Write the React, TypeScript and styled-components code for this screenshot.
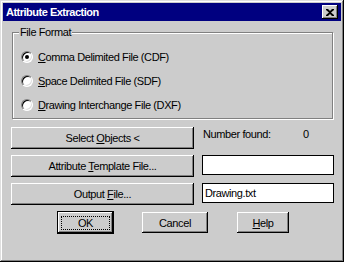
import React, { useState } from 'react';
import styled, { createGlobalStyle } from 'styled-components';

const face = '#cccccc';

const GlobalStyle = createGlobalStyle`
    html, body {
        margin: 0;
        padding: 0;
        background: ${face};
    }
    body {
        font-family: "Liberation Sans", Arial, sans-serif;
        font-size: 11px;
        letter-spacing: -0.4px;
        color: #000;
    }
`;

const formats = [
    { key: 'C', rest: 'omma Delimited File (CDF)' },
    { key: 'S', rest: 'pace Delimited File (SDF)' },
    { key: 'D', rest: 'rawing Interchange File (DXF)' },
];

function App() {
    const [format, setFormat] = useState(0);
    const [template, setTemplate] = useState('');
    const [output, setOutput] = useState('Drawing.txt');

    return (
        <>
            <GlobalStyle />
            <Window>
                <TitleBar>
                    <Title>Attribute Extraction</Title>
                    <CloseButton>
                        <svg width="8" height="7" viewBox="0 0 8 7">
                            <path d="M0 0h2l2 2 2-2h2v1L5 3.5 8 6v1H6L4 5 2 7H0V6l3-2.5L0 1z" fill="#000" />
                        </svg>
                    </CloseButton>
                </TitleBar>
                <Body>
                    <GroupBox>
                        <Legend>File Format</Legend>
                        {formats.map((f, i) => (
                            <RadioRow key={f.key} onClick={() => setFormat(i)}>
                                <Radio>{format === i && <Dot />}</Radio>
                                <span>
                                    <u>{f.key}</u>
                                    {f.rest}
                                </span>
                            </RadioRow>
                        ))}
                    </GroupBox>
                    <Grid>
                        <Button>
                            Select <u>O</u>bjects &lt;
                        </Button>
                        <Found>
                            <Label>Number found:</Label>
                            <span>0</span>
                        </Found>
                        <Button>
                            Attribute <u>T</u>emplate File...
                        </Button>
                        <Field value={template} onChange={(e) => setTemplate(e.target.value)} />
                        <Button>
                            Output <u>F</u>ile...
                        </Button>
                        <Field value={output} onChange={(e) => setOutput(e.target.value)} />
                    </Grid>
                    <Actions>
                        <Button $width={55} $default>
                            <Focus />
                            OK
                        </Button>
                        <Button $width={66}>Cancel</Button>
                        <Button $width={52}>
                            <u>H</u>elp
                        </Button>
                    </Actions>
                </Body>
            </Window>
        </>
    );
}

const Window = styled.div`
    box-sizing: border-box;
    width: 344px;
    height: 262px;
    padding: 3px;
    background: ${face};
    box-shadow: inset -1px -1px #000, inset 1px 1px #dfdfdf, inset -2px -2px #808080, inset 2px 2px #fff;
    display: flex;
    flex-direction: column;
`;

const TitleBar = styled.div`
    height: 18px;
    background: #000080;
    display: flex;
    align-items: center;
    justify-content: space-between;
    padding: 0 3px 0 3px;
`;

const Title = styled.span`
    color: #fff;
    font-weight: bold;
    font-size: 11px;
    letter-spacing: -0.5px;
`;

const CloseButton = styled.div`
    box-sizing: border-box;
    width: 16px;
    height: 14px;
    background: ${face};
    display: flex;
    align-items: center;
    justify-content: center;
    box-shadow: inset -1px -1px #000, inset 1px 1px #fff, inset -2px -2px #808080;
`;

const Body = styled.div`
    display: flex;
    flex-direction: column;
    padding: 11px 0 0 8px;
`;

const GroupBox = styled.div`
    position: relative;
    box-sizing: border-box;
    width: 321px;
    height: 87px;
    margin-left: 1px;
    padding: 12px 0 0 8px;
    border: 1px solid #808080;
    box-shadow: inset 1px 1px #fff, 1px 1px #fff;
    display: flex;
    flex-direction: column;
`;

const Legend = styled.span`
    position: absolute;
    top: -7px;
    left: 6px;
    padding: 0 1px;
    background: ${face};
    line-height: 13px;
`;

const RadioRow = styled.div`
    height: 24px;
    display: flex;
    align-items: center;
    gap: 5px;
    cursor: default;
`;

const Radio = styled.span`
    box-sizing: border-box;
    width: 12px;
    height: 12px;
    border-radius: 50%;
    background: #fff;
    border: 1px solid;
    border-color: #808080 #fff #fff #808080;
    box-shadow: inset 1px 1px #000, inset -1px -1px #dfdfdf;
    display: flex;
    align-items: center;
    justify-content: center;
`;

const Dot = styled.span`
    width: 4px;
    height: 4px;
    border-radius: 50%;
    background: #000;
`;

const Grid = styled.div`
    display: grid;
    grid-template-columns: 183px 132px;
    grid-auto-rows: 22px;
    column-gap: 8px;
    row-gap: 6px;
    margin-top: 8px;
`;

const Button = styled.button<{ $width?: number; $default?: boolean }>`
    position: relative;
    box-sizing: border-box;
    width: ${(p) => (p.$width ? `${p.$width}px` : '100%')};
    height: ${(p) => (p.$width ? '21px' : '22px')};
    padding: 0;
    border: none;
    background: ${face};
    font-family: inherit;
    font-size: 11px;
    letter-spacing: inherit;
    color: #000;
    box-shadow: inset -1px -1px #000, inset 1px 1px #fff, inset -2px -2px #808080, inset 2px 2px ${face};
    outline: ${(p) => (p.$default ? '1px solid #000' : 'none')};
`;

const Focus = styled.span`
    position: absolute;
    inset: 4px 3px 3px 3px;
    border: 1px dotted #000;
`;

const Found = styled.div`
    display: flex;
    align-items: flex-start;
    line-height: 13px;
    padding: 1px 0 0 1px;
    white-space: nowrap;
`;

const Label = styled.span`
    width: 100px;
`;

const Field = styled.input`
    box-sizing: border-box;
    width: 132px;
    height: 20px;
    border: 1px solid #000;
    background: #fff;
    padding: 0 2px;
    font-family: inherit;
    font-size: 11px;
    letter-spacing: inherit;
    outline: none;
`;

const Actions = styled.div`
    display: flex;
    gap: 29px;
    margin: 7px 0 0 47px;
`;

export default App;
